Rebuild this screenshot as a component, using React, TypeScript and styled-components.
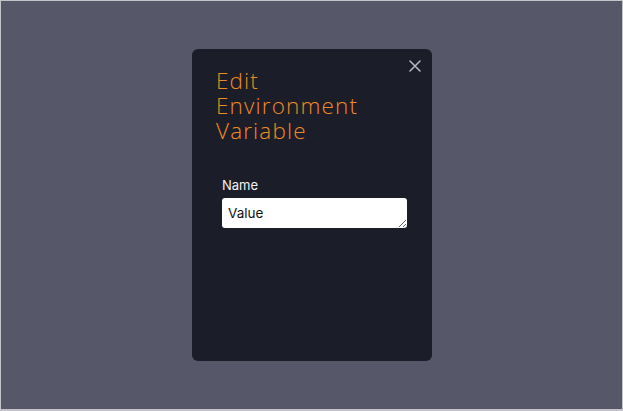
import React from "react";
import styled, { createGlobalStyle } from "styled-components";

const Global = createGlobalStyle`
  html, body { margin: 0; padding: 0; }
  body { font-family: Inter, "Noto Sans", sans-serif; }
  * { box-sizing: border-box; }
`;

const Frame = styled.div`
  width: 623px;
  height: 411px;
  border: 1px solid #c4c4c8;
  border-bottom-width: 2px;
  background: #565869;
  display: flex;
  justify-content: center;
  align-items: flex-start;
  padding-top: 48px;
`;

const Modal = styled.div`
  position: relative;
  width: 240px;
  height: 312px;
  margin-left: 1px;
  background: #1b1d28;
  border-radius: 6px;
  padding: 19px 12px 0 24px;
  display: flex;
  flex-direction: column;
`;

const Title = styled.h2`
  margin: 0;
  font-family: "Open Sans", Lato, sans-serif;
  font-weight: 300;
  font-size: 22.5px;
  line-height: 25px;
  color: #f28a22;
  letter-spacing: 1.15px;
`;

const Close = styled.button`
  position: absolute;
  top: 9px;
  right: 9px;
  width: 16px;
  height: 16px;
  padding: 0;
  border: none;
  background: transparent;
  display: flex;
  align-items: center;
  justify-content: center;
  cursor: pointer;
`;

const Field = styled.div`
  margin-top: 34px;
  margin-left: 6px;
  display: flex;
  flex-direction: column;
  gap: 5px;
`;

const Label = styled.label`
  font-size: 13px;
  line-height: 16px;
  color: #f2f2f4;
`;

const Input = styled.textarea`
  width: 185px;
  height: 30px;
  border: none;
  border-radius: 3px;
  background: #ffffff;
  padding: 6px 6px;
  font-family: Inter, sans-serif;
  font-size: 13.5px;
  line-height: 18px;
  color: #111;
  resize: vertical;
  overflow: hidden;
  outline: none;
`;

export default function App() {
  return (
    <>
      <Global />
      <Frame>
        <Modal>
          <Close aria-label="Close">
            <svg width="12" height="12" viewBox="0 0 12 12">
              <path d="M1 1 L11 11 M11 1 L1 11" stroke="#b9bac2" strokeWidth="1.5" strokeLinecap="round" />
            </svg>
          </Close>
          <Title>
            Edit
            <br />
            Environment
            <br />
            Variable
          </Title>
          <Field>
            <Label>Name</Label>
            <Input defaultValue="Value" />
          </Field>
        </Modal>
      </Frame>
    </>
  );
}
